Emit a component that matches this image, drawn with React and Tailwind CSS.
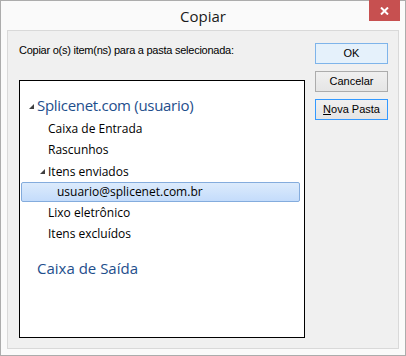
export default function App() {
  const ui = { fontFamily: '"Liberation Sans", Arial, sans-serif' };
  const seg = { fontFamily: '"Open Sans", "Noto Sans", sans-serif' };
  const Tri = ({ className }) => (
    <svg width="5" height="5" viewBox="0 0 5 5" className={className}>
      <polygon points="5,0 5,5 0,5" fill="#404040" />
    </svg>
  );
  return (
    <div className="w-[406px] h-[356px] bg-[#fafafa] border border-[#acacac] flex flex-col">
      <div className="h-[29px] relative flex items-center justify-center shrink-0">
        <span className="text-[15px] text-[#1a1a1a] mt-[1px]" style={seg}>Copiar</span>
        <div className="absolute right-[5px] top-[-1px] w-[31px] h-[21px] bg-[#c75050] flex items-center justify-center">
          <svg width="9" height="8" viewBox="0 0 9 8">
            <path d="M1 0.5 L8 7.5 M8 0.5 L1 7.5" stroke="white" strokeWidth="2" />
          </svg>
        </div>
      </div>
      <div className="ml-[6px] mr-[6px] h-[319px] border border-[#d9d9d9] bg-[#f0f0f0] flex">
        <div className="flex flex-col pl-[11px] pt-[12px] w-[297px]">
          <div className="text-[11px] text-black h-[14px] leading-[14px] tracking-[-0.25px]" style={ui}>
            Copiar o(s) item(ns) para a pasta selecionada:
          </div>
          <div className="mt-[23px] w-[286px] h-[258px] border border-black bg-white flex flex-col pt-[14px]" style={seg}>
            <div className="flex items-center h-[20px] pl-[9px] gap-[3px]">
              <Tri className="mt-[2px]" />
              <span className="text-[15px] text-[#1e4e8c] leading-[20px] tracking-[-0.3px]">Splicenet.com (usuario)</span>
            </div>
            <div className="h-[21px] pl-[28px] text-[12px] leading-[21px] text-black mt-[3px]">Caixa de Entrada</div>
            <div className="h-[21px] pl-[28px] text-[12px] leading-[21px] text-black">Rascunhos</div>
            <div className="h-[22px] pl-[20px] flex items-center gap-[3px]">
              <Tri />
              <span className="text-[12px] leading-[21px] text-black">Itens enviados</span>
            </div>
            <div className="mx-[1px] w-[279px] h-[20px] border border-[#84acdd] rounded-[2px] bg-gradient-to-b from-[#dcebfc] to-[#c4dcfb] pl-[35px] text-[12px] leading-[18px] text-black">
              usuario@splicenet.com.br
            </div>
            <div className="h-[21px] pl-[28px] text-[12px] leading-[21px] text-black">Lixo eletrônico</div>
            <div className="h-[21px] pl-[28px] text-[12px] leading-[21px] text-black">Itens excluídos</div>
            <div className="h-[20px] pl-[17px] mt-[14px] text-[15px] leading-[20px] text-[#1e4e8c]">Caixa de Saída</div>
          </div>
        </div>
        <div className="flex flex-col pt-[12px] pl-[10px] gap-[7px]" style={ui}>
          <button className="w-[73px] h-[21px] border border-[#7eb4ea] bg-[#e5f1fb] text-[11px] text-black leading-none">OK</button>
          <button className="w-[73px] h-[21px] border border-[#acacac] bg-gradient-to-b from-[#f0f0f0] to-[#e5e5e5] text-[11px] text-black leading-none">Cancelar</button>
          <button className="w-[73px] h-[21px] border border-[#3399ff] bg-gradient-to-b from-[#f0f0f0] to-[#e5e5e5] text-[11px] text-black leading-none">
            <span className="underline">N</span>ova Pasta
          </button>
        </div>
      </div>
    </div>
  );
}
